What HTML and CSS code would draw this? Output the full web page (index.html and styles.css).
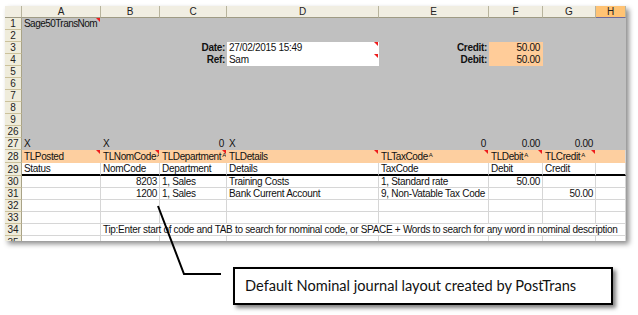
FILE: index.html
```html
<!DOCTYPE html>
<html lang="en">
<head>
    <meta charset="UTF-8">
    <title>Sage50TransNom</title>
    <link rel="stylesheet" href="styles.css">
</head>
<body>
    <div class="sheet">
        <table class="grid">
            <colgroup>
                <col class="w-rh"><col class="w-a"><col class="w-b"><col class="w-c"><col class="w-d">
                <col class="w-e"><col class="w-f"><col class="w-g"><col class="w-h">
            </colgroup>
            <thead>
                <tr>
                    <th class="corner"></th><th>A</th><th>B</th><th>C</th><th>D</th>
                    <th>E</th><th>F</th><th>G</th><th class="sel">H</th>
                </tr>
            </thead>
            <tbody>
                <tr class="gray">
                    <th>1</th><td class="note title">Sage50TransNom</td><td></td><td></td><td></td><td></td><td></td><td></td><td></td>
                </tr>
                <tr class="gray"><th>2</th><td></td><td></td><td></td><td></td><td></td><td></td><td></td><td></td></tr>
                <tr class="gray">
                    <th>3</th><td></td><td></td><td class="lbl">Date:</td><td class="input note">27/02/2015 15:49</td>
                    <td class="lbl">Credit:</td><td class="total num">50.00</td><td></td><td></td>
                </tr>
                <tr class="gray">
                    <th>4</th><td></td><td></td><td class="lbl">Ref:</td><td class="input note">Sam</td>
                    <td class="lbl">Debit:</td><td class="total num">50.00</td><td></td><td></td>
                </tr>
                <tr class="gray"><th>5</th><td></td><td></td><td></td><td></td><td></td><td></td><td></td><td></td></tr>
                <tr class="gray"><th>6</th><td></td><td></td><td></td><td></td><td></td><td></td><td></td><td></td></tr>
                <tr class="gray"><th>7</th><td></td><td></td><td></td><td></td><td></td><td></td><td></td><td></td></tr>
                <tr class="gray"><th>8</th><td></td><td></td><td></td><td></td><td></td><td></td><td></td><td></td></tr>
                <tr class="gray"><th>9</th><td></td><td></td><td></td><td></td><td></td><td></td><td></td><td></td></tr>
                <tr class="gray"><th>26</th><td></td><td></td><td></td><td></td><td></td><td></td><td></td><td></td></tr>
                <tr class="gray">
                    <th>27</th><td>X</td><td>X</td><td class="num">0</td><td>X</td>
                    <td class="num">0</td><td class="num">0.00</td><td class="num">0.00</td><td></td>
                </tr>
                <tr class="fields">
                    <th>28</th>
                    <td class="note">TLPosted</td>
                    <td class="note">TLNomCode<span class="sort">A</span></td>
                    <td class="note">TLDepartment<span class="sort">A</span></td>
                    <td class="note">TLDetails</td>
                    <td class="note">TLTaxCode<span class="sort">A</span></td>
                    <td class="note">TLDebit<span class="sort">A</span></td>
                    <td class="note">TLCredit<span class="sort">A</span></td>
                    <td></td>
                </tr>
                <tr class="captions">
                    <th>29</th><td>Status</td><td>NomCode</td><td>Department</td><td>Details</td>
                    <td>TaxCode</td><td>Debit</td><td>Credit</td><td></td>
                </tr>
                <tr>
                    <th>30</th><td></td><td class="num">8203</td><td>1, Sales</td><td>Training Costs</td>
                    <td>1, Standard rate</td><td class="num">50.00</td><td></td><td></td>
                </tr>
                <tr>
                    <th>31</th><td></td><td class="num">1200</td><td>1, Sales</td><td>Bank Current Account</td>
                    <td>9, Non-Vatable Tax Code</td><td></td><td class="num">50.00</td><td></td>
                </tr>
                <tr><th>32</th><td></td><td></td><td></td><td></td><td></td><td></td><td></td><td></td></tr>
                <tr><th>33</th><td></td><td></td><td></td><td></td><td></td><td></td><td></td><td></td></tr>
                <tr>
                    <th>34</th><td></td>
                    <td class="tip" colspan="7">Tip:Enter start of code and TAB to search for nominal code, or SPACE + Words to search for any word in nominal description</td>
                </tr>
                <tr class="last"><th>35</th><td></td><td></td><td></td><td></td><td></td><td></td><td></td><td></td></tr>
            </tbody>
        </table>
    </div>

    <div class="callout">Default Nominal journal layout created by PostTrans</div>

    <svg class="pointer" width="638" height="315" viewBox="0 0 638 315">
        <polyline points="158,206 184,274 221,274" fill="none" stroke="#000" stroke-width="2"/>
    </svg>
</body>
</html>
```

FILE: styles.css
```css
body {
    margin: 0;
    background: #fff;
    font-family: "Liberation Sans", Arial, sans-serif;
    position: relative;
    width: 638px;
    height: 315px;
    overflow: hidden;
}
.sheet {
    margin: 6px 0 0 5px;
    width: 621px;
    height: 235px;
    overflow: hidden;
    box-shadow: 3px 3px 5px rgba(0, 0, 0, 0.45);
}
.grid {
    table-layout: fixed;
    border-collapse: separate;
    border-spacing: 0;
    width: 621px;
    font-size: 10px;
    letter-spacing: -0.3px;
    color: #111;
}
.w-rh { width: 17px; }
.w-a { width: 79px; }
.w-b { width: 59px; }
.w-c { width: 67px; }
.w-d { width: 152px; }
.w-e { width: 110px; }
.w-f { width: 54px; }
.w-g { width: 53px; }
.w-h { width: 30px; }

th, td {
    height: 11px;
    line-height: 11px;
    padding: 0 2px;
    white-space: nowrap;
    overflow: hidden;
    text-align: left;
    font-weight: normal;
}
thead th {
    background: #f1eee2;
    border-right: 1px solid #b8b49d;
    border-bottom: 1px solid #9f9b84;
    text-align: center;
    letter-spacing: 0;
    color: #222;
}
thead th.sel {
    background: #ffc374;
    border-bottom-color: #6d6a9a;
}
tbody th {
    background: #efecdb;
    border-right: 1px solid #a9a387;
    border-bottom: 1px solid #cbc19b;
    text-align: center;
    letter-spacing: 0;
    color: #222;
}
td {
    background: #fff;
    border-right: 1px solid #d6d6d6;
    border-bottom: 1px solid #d6d6d6;
    position: relative;
}
.gray td {
    background: #c0c0c0;
    border-color: #c0c0c0;
}
.gray td.input {
    background: #fff;
    border-color: #fff;
}
.gray td.total {
    background: #ffcc99;
    border-color: #ffcc99;
}
.lbl {
    font-weight: bold;
    text-align: right;
    padding-right: 1px;
}
.num {
    text-align: right;
}
td.note {
    padding-right: 0;
}
td.title {
    letter-spacing: -0.55px;
}
.fields td {
    background: #fdcfa0;
    border-color: #fdcfa0;
    letter-spacing: -0.4px;
}
.fields td:last-child {
    border-right-color: #d6d6d6;
}
.captions td {
    height: 10px;
    line-height: 11px;
    border-bottom: 2px solid #000;
}
.last th {
    line-height: 13px;
}
.sort {
    font-size: 6px;
    vertical-align: 3px;
    margin-left: 1px;
    letter-spacing: 0;
}
.note::after {
    content: "";
    position: absolute;
    top: 0;
    right: 0;
    border-top: 4px solid #ee1c1c;
    border-left: 4px solid transparent;
}
.tip {
    overflow: visible;
}

.callout {
    margin: 26px 0 0 233px;
    width: 366px;
    height: 34px;
    border: 2px solid #000;
    background: #fff;
    box-shadow: 3px 3px 4px rgba(0, 0, 0, 0.5);
    font-family: Lato, "Open Sans", sans-serif;
    font-size: 14.6px;
    line-height: 34px;
    padding-left: 10px;
    color: #111;
}
.pointer {
    position: absolute;
    left: 0;
    top: 0;
    pointer-events: none;
}
```
